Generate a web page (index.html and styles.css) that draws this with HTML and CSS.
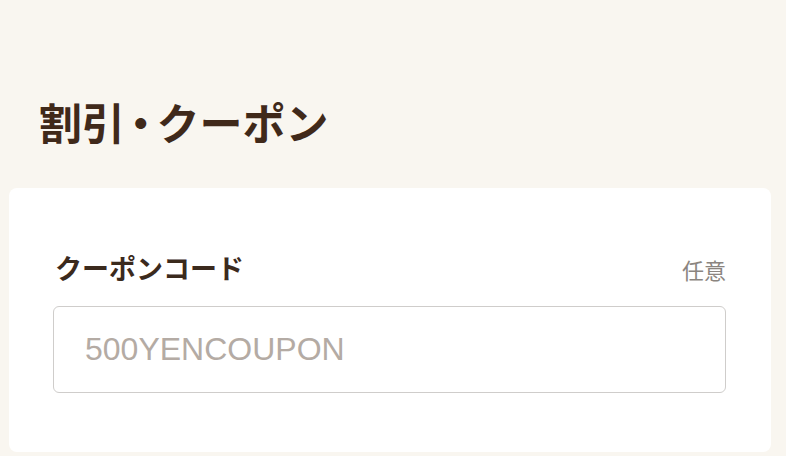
FILE: index.html
```html
<!DOCTYPE html>
<html lang="ja">
<head>
  <meta charset="UTF-8" />
  <meta name="viewport" content="width=device-width, initial-scale=1.0"/>
  <title>割引・クーポン</title>
  <link rel="stylesheet" href="styles.css">
</head>
<body>
  <div class="section">
    <h1 class="section-title">割引<span class="dot">・</span>クーポン</h1>

    <div class="card">
      <div class="field-head">
        <label class="field-label" for="coupon">クーポンコード</label>
        <span class="field-note">任意</span>
      </div>
      <input class="field-input" id="coupon" type="text" placeholder="500YENCOUPON" />
    </div>
  </div>
</body>
</html>
```

FILE: styles.css
```css
body {
  margin: 0;
  background: #f9f6f0;
  font-family: "Noto Sans CJK JP", "Noto Sans", sans-serif;
  color: #3e2a1c;
}

.section {
  padding-top: 100px;
}

.section-title {
  margin: 0 0 46px 39px;
  font-size: 43px;
  line-height: 42px;
  font-weight: 700;
  color: #40291a;
}

.section-title .dot {
  font-feature-settings: "palt";
  padding: 0 5px;
}

.card {
  margin: 0 15px 4px 9px;
  padding: 66px 45px 59px 44px;
  background: #fff;
  border-radius: 8px;
}

.field-head {
  display: flex;
  justify-content: space-between;
  align-items: baseline;
  margin-bottom: 25px;
  padding-left: 2px;
}

.field-label {
  font-size: 27px;
  line-height: 27px;
  font-weight: 700;
  color: #3b2a1d;
}

.field-note {
  font-size: 22px;
  line-height: 22px;
  color: #8b8580;
}

.field-input {
  display: block;
  box-sizing: border-box;
  width: 100%;
  height: 87px;
  margin: 0;
  padding: 0 31px;
  border: 1.5px solid #cfcdcb;
  border-radius: 6px;
  background: #fff;
  font-family: "Liberation Sans", Arial, sans-serif;
  font-size: 32px;
  color: #3b2a1d;
  outline: none;
}

.field-input::placeholder {
  color: #b4aba4;
}
```
